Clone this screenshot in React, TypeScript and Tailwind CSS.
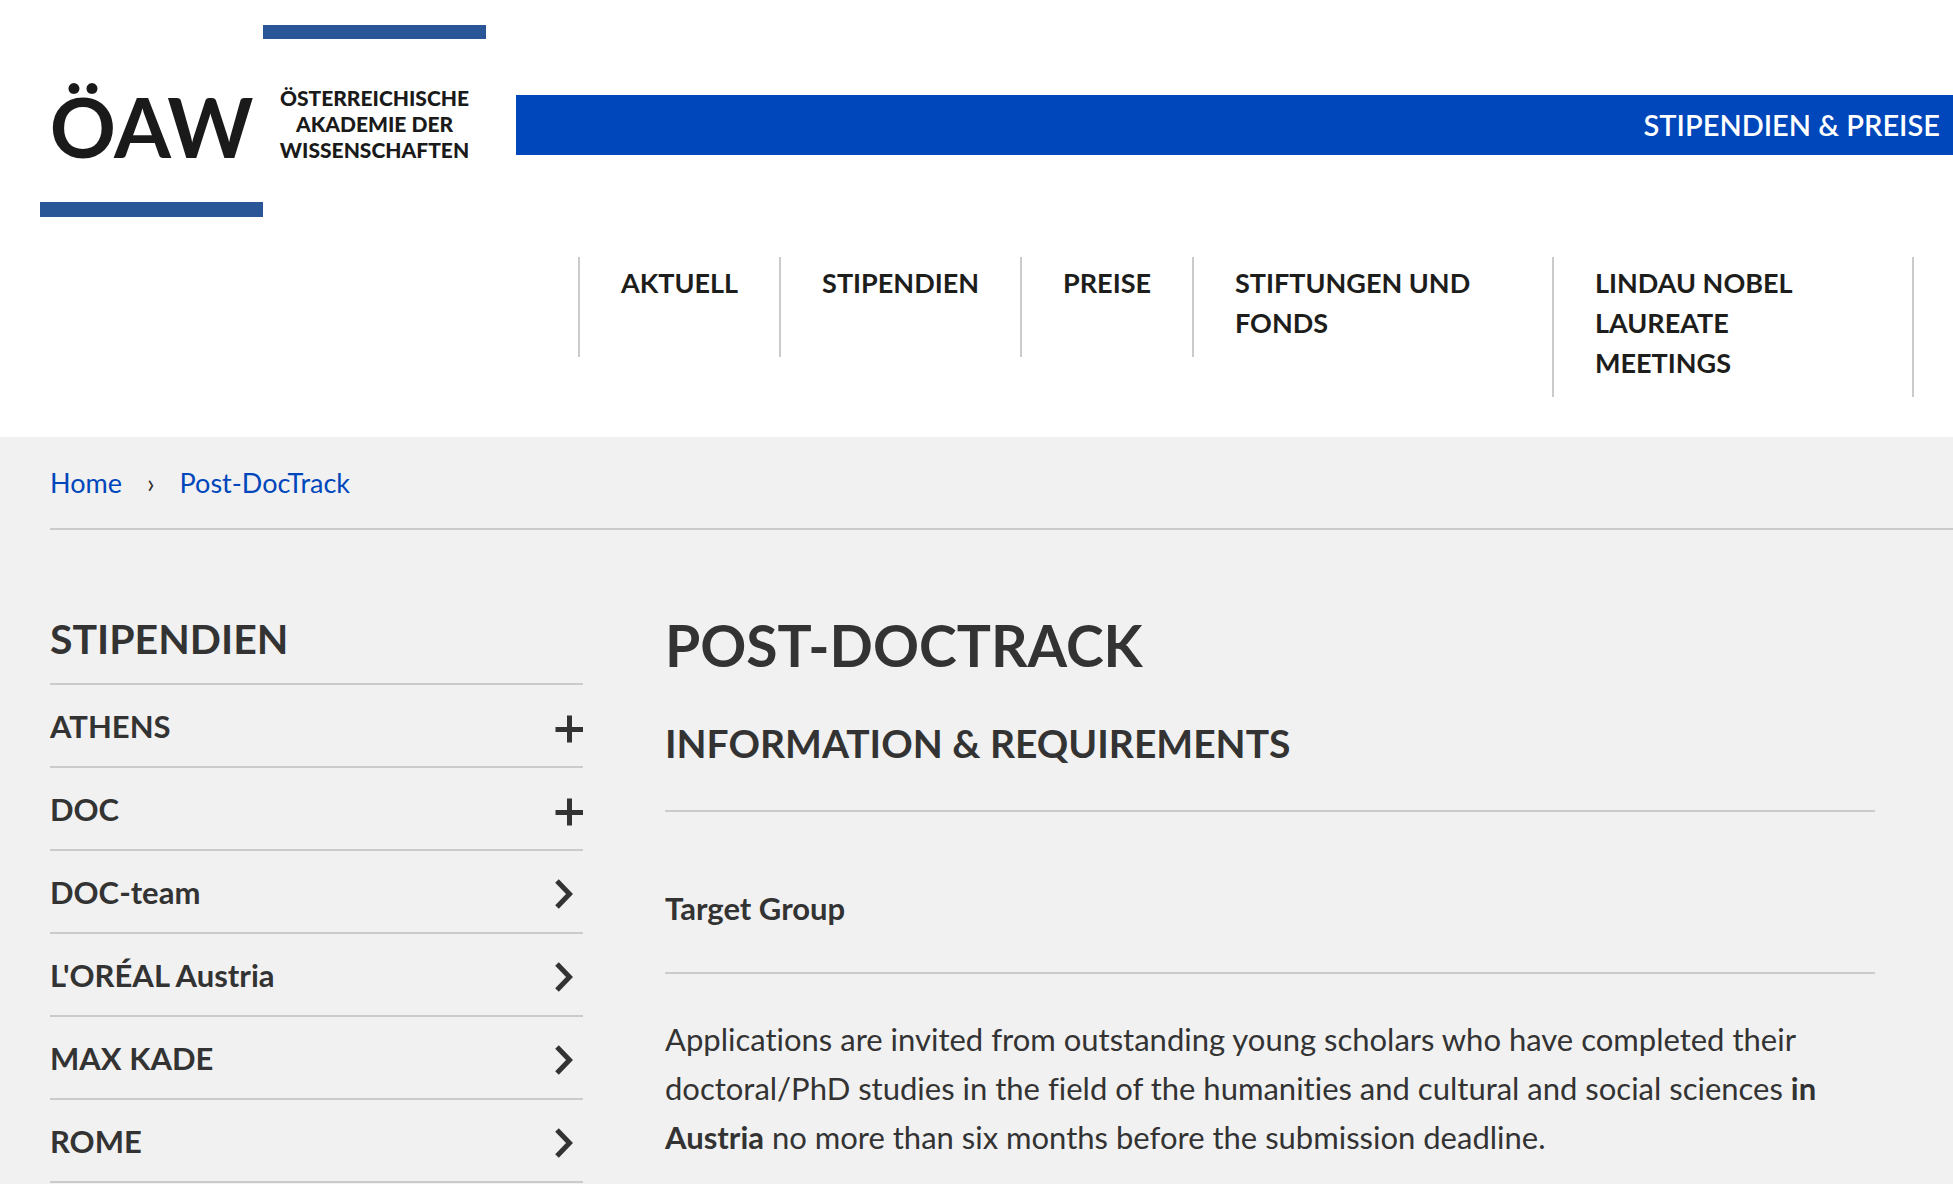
import { useState } from 'react';

interface NavEntry {
	label: string;
	href: string;
}

interface SidebarEntry extends NavEntry {
	expandable?: boolean;
}

const mainNav: NavEntry[] = [
	{ label: 'Aktuell', href: '#aktuell' },
	{ label: 'Stipendien', href: '#stipendien' },
	{ label: 'Preise', href: '#preise' },
	{ label: 'Stiftungen und Fonds', href: '#stiftungen' },
	{ label: 'Lindau Nobel Laureate Meetings', href: '#lindau' },
];

const sidebarNav: SidebarEntry[] = [
	{ label: 'ATHENS', href: '#athens', expandable: true },
	{ label: 'DOC', href: '#doc', expandable: true },
	{ label: 'DOC-team', href: '#doc-team' },
	{ label: "L'ORÉAL Austria", href: '#loreal' },
	{ label: 'MAX KADE', href: '#max-kade' },
	{ label: 'ROME', href: '#rome' },
];

function Logo() {
	return (
		<a href="#home" className="ml-10 mt-[25px] flex w-[446px] shrink-0 text-[#1a1a1a]">
			<span className="flex w-[223px] flex-col justify-end">
				<span className="text-center text-[82px] font-bold leading-[100px]">ÖAW</span>
				<span className="mt-[26px] h-[15px] bg-[#2a5597]" />
			</span>
			<span className="flex h-48 w-[223px] flex-col">
				<span className="h-[14px] bg-[#2a5597]" />
				<span className="mt-[46px] text-center text-[21px] font-black uppercase leading-[26px]">
					Österreichische
					<br />
					Akademie der
					<br />
					Wissenschaften
				</span>
			</span>
		</a>
	);
}

function PlusIcon() {
	return (
		<svg width="28" height="28" viewBox="0 0 28 28" fill="none" stroke="currentColor" strokeWidth="5" aria-hidden="true">
			<path d="M14.5 0.5V27.5M0.5 14.5H28" />
		</svg>
	);
}

function ChevronIcon() {
	return (
		<svg width="18" height="30" viewBox="0 0 18 30" fill="none" stroke="currentColor" strokeWidth="5" aria-hidden="true">
			<path d="M2 2L14.5 15L2 28" />
		</svg>
	);
}

function Header() {
	return (
		<header className="bg-white pb-10">
			<div className="flex items-start">
				<Logo />
				<div className="ml-[30px] mt-[95px] flex h-[60px] flex-1 items-center justify-end bg-[#0047bb] pr-[13px]">
					<a href="#stipendien-preise" className="text-[29px] font-semibold uppercase leading-10 text-white">
						Stipendien &amp; Preise
					</a>
				</div>
			</div>
			<nav aria-label="Hauptnavigation" className="ml-[578px] mr-[38px] mt-10">
				<ul className="flex items-start">
					{mainNav.map((item) => (
						<li
							key={item.href}
							className="min-h-[100px] max-w-[360px] border-l-2 border-[#cbcbcb] px-[41px] pb-3.5 pt-1.5 last:max-w-[362px] last:border-r-2"
						>
							<a href={item.href} className="block text-[27px] font-bold uppercase leading-10 text-[#1d1d1b]">
								{item.label}
							</a>
						</li>
					))}
				</ul>
			</nav>
		</header>
	);
}

function Sidebar() {
	const [openItem, setOpenItem] = useState<string | null>(null);

	return (
		<nav aria-labelledby="sidebar-title">
			<h2 id="sidebar-title" className="border-b-2 border-[#cbcbcb] pb-5 text-[41px] font-bold leading-[48px]">
				STIPENDIEN
			</h2>
			<ul>
				{sidebarNav.map((item) => (
					<li
						key={item.href}
						className="flex h-[83px] items-center justify-between border-b-2 border-[#cbcbcb] text-[31px] font-bold leading-10"
					>
						<a href={item.href}>{item.label}</a>
						{item.expandable ? (
							<button
								type="button"
								aria-label={item.label}
								aria-expanded={openItem === item.href}
								onClick={() => setOpenItem((prev) => (prev === item.href ? null : item.href))}
								className="pt-1.5"
							>
								<PlusIcon />
							</button>
						) : (
							<span className="w-7 pt-1">
								<ChevronIcon />
							</span>
						)}
					</li>
				))}
			</ul>
		</nav>
	);
}

export default function App() {
	return (
		<div className="flex min-h-screen flex-col bg-[#f1f1f1] font-[Lato,'Open_Sans',sans-serif] text-[#333333]">
			<Header />

			{/* Breadcrumb */}
			<nav aria-label="Breadcrumb" className="ml-[50px] border-b-2 border-[#cbcbcb] pb-[26px] pt-[27px]">
				<ol className="flex items-center text-[27px] leading-[38px]">
					<li>
						<a href="#home" className="text-[#0047bb]">
							Home
						</a>
					</li>
					<li aria-hidden="true" className="px-[25px]">
						›
					</li>
					<li>
						<a href="#post-doctrack" className="text-[#0047bb]">
							Post-DocTrack
						</a>
					</li>
				</ol>
			</nav>

			<div className="grid grid-cols-[533fr_1210fr] gap-[82px] pl-[50px] pr-[78px] pt-[85px]">
				<Sidebar />
				<main>
					<h1 className="text-[57px] font-bold uppercase leading-[60px]">Post-DocTrack</h1>
					<h2 className="mt-10 border-b-2 border-[#cbcbcb] pb-[39px] text-[39px] font-bold uppercase leading-[56px]">
						Information &amp; Requirements
					</h2>
					<h3 className="border-b-2 border-[#cbcbcb] pb-[42px] pt-[74px] text-[31px] font-bold leading-[44px]">
						Target Group
					</h3>
					<p className="mt-[41px] text-[31px] leading-[49px] [font-variant-ligatures:none]">
						Applications are invited from outstanding young scholars who have completed their doctoral/PhD studies in the field of
						the humanities and cultural and social sciences <strong>in Austria</strong> no more than six months before the
						submission deadline.
					</p>
				</main>
			</div>
		</div>
	);
}
